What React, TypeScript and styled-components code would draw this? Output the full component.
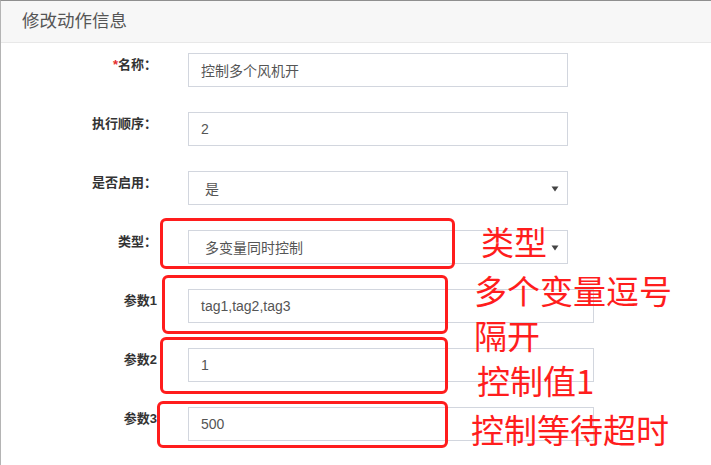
import React from "react";
import styled, { createGlobalStyle } from "styled-components";

const Global = createGlobalStyle`
  html, body { margin: 0; padding: 0; background: #fff; }
  body { font-family: "Liberation Sans", "Noto Sans CJK SC", sans-serif; }
  * { box-sizing: border-box; }
`;

const Modal = styled.div`
  width: 711px;
  height: 465px;
  border-top: 1px solid #8f8f8f;
  border-left: 1px solid #b4b4b4;
  background: #fff;
  overflow: hidden;
`;

const Header = styled.div`
  height: 42px;
  background: #f7f7f7;
  border-bottom: 1px solid #e8e8e8;
  display: flex;
  align-items: center;
  padding-left: 21px;
`;

const Title = styled.h4`
  margin: 0;
  font-size: 17.5px;
  font-weight: normal;
  color: #555;
  line-height: 20px;
  padding-bottom: 1px;
`;

const Body = styled.div`
  position: relative;
  padding-top: 10px;
`;

const Row = styled.div`
  display: flex;
  align-items: flex-start;
  margin-bottom: 25px;
`;

const Label = styled.label`
  width: 156px;
  text-align: right;
  font-size: 13px;
  font-weight: bold;
  color: #333;
  line-height: 18px;
  padding-top: 3px;
`;

const Star = styled.span`
  color: #e52d2d;
`;

const Field = styled.div<{ $w: number }>`
  margin-left: 31px;
  width: ${(p) => p.$w}px;
  height: 34px;
  border: 1px solid #d2d6de;
  background: #fff;
  display: flex;
  align-items: center;
  padding: 0 12px;
  font-size: 14px;
  color: #555;
`;

const SelectField = styled(Field)`
  padding: 0 8px 0 16px;
  justify-content: space-between;
`;

const Arrow = styled.svg`
  width: 8px;
  height: 6px;
  margin-top: 2px;
`;

const Box = styled.div<{ $l: number; $t: number; $w: number; $h: number }>`
  position: absolute;
  left: ${(p) => p.$l}px;
  top: ${(p) => p.$t}px;
  width: ${(p) => p.$w}px;
  height: ${(p) => p.$h}px;
  border: 3px solid #ff1d1d;
  border-radius: 6px;
  pointer-events: none;
`;

const Note = styled.div<{ $l: number; $t: number }>`
  position: absolute;
  left: ${(p) => p.$l}px;
  top: ${(p) => p.$t}px;
  font-family: "Noto Sans CJK SC", sans-serif;
  font-size: 33px;
  line-height: 45px;
  color: #ff1d1d;
  white-space: nowrap;
`;

const Select = ({ value }: { value: string }) => (
  <SelectField $w={380}>
    <span>{value}</span>
    <Arrow viewBox="0 0 8 6">
      <path d="M0.5 0.5 L7.5 0.5 L4 5.5 Z" fill="#444" />
    </Arrow>
  </SelectField>
);

export default function App() {
  return (
    <>
      <Global />
      <Modal>
        <Header>
          <Title>修改动作信息</Title>
        </Header>
        <Body>
          <Row>
            <Label>
              <Star>*</Star>名称：
            </Label>
            <Field $w={380}>控制多个风机开</Field>
          </Row>
          <Row>
            <Label>执行顺序：</Label>
            <Field $w={380}>2</Field>
          </Row>
          <Row>
            <Label>是否启用：</Label>
            <Select value="是" />
          </Row>
          <Row>
            <Label>类型：</Label>
            <Select value="多变量同时控制" />
          </Row>
          <Row>
            <Label>参数1</Label>
            <Field $w={406}>tag1,tag2,tag3</Field>
          </Row>
          <Row>
            <Label>参数2</Label>
            <Field $w={406}>1</Field>
          </Row>
          <Row>
            <Label>参数3</Label>
            <Field $w={406}>500</Field>
          </Row>

          <Box $l={159} $t={175} $w={295} $h={51} />
          <Box $l={161} $t={232} $w={286} $h={59} />
          <Box $l={159} $t={294} $w={288} $h={57} />
          <Box $l={156} $t={358} $w={291} $h={47} />

          <Note $l={480} $t={176}>类型</Note>
          <Note $l={473} $t={225}>
            多个变量逗号
            <br />
            隔开
          </Note>
          <Note $l={476} $t={315}>控制值1</Note>
          <Note $l={470} $t={364}>控制等待超时</Note>
        </Body>
      </Modal>
    </>
  );
}
